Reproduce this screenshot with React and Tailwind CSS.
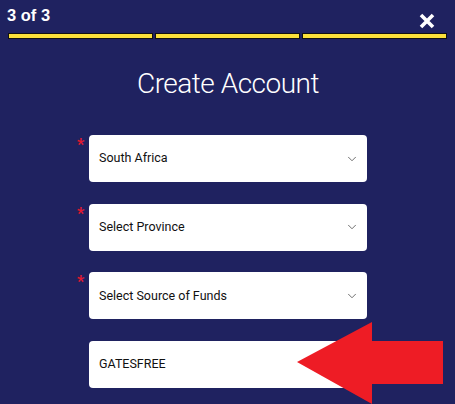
import { ChevronDown } from "lucide-react";

function SelectField({ label, required }) {
  return (
    <div className="relative">
      {required && (
        <span className="absolute -left-[12px] top-[2px] text-[16px] leading-none text-[#e3192f] font-bold">
          *
        </span>
      )}
      <div className="h-[47px] bg-white rounded-[4px] flex items-center justify-between pl-[10px] pr-[8px]">
        <span className="text-[12.5px] text-[#111]">{label}</span>
        <ChevronDown size={14} strokeWidth={1.3} className="text-[#444]" />
      </div>
    </div>
  );
}

export default function App() {
  return (
    <div
      className="relative w-[455px] h-[404px] overflow-hidden bg-[#1f2260]"
      style={{ fontFamily: "Roboto, 'Liberation Sans', sans-serif" }}
    >
      <div className="flex justify-between items-start pl-[7px] pr-[19px] pt-[3px]">
        <span className="text-[16.5px] font-bold text-white" style={{ fontFamily: "'Liberation Sans', Arial, sans-serif" }}>
          3 of 3
        </span>
        <svg width="18" height="16" viewBox="0 0 18 16" className="mt-[10px]">
          <path d="M3 2 L15 14 M15 2 L3 14" stroke="white" strokeWidth="3.6" strokeLinecap="butt" />
        </svg>
      </div>

      <div className="flex gap-[2px] px-[8px] mt-[4px]">
        <div className="flex-1 h-[6px] bg-[#fbe03a] border border-[#111]" />
        <div className="flex-1 h-[6px] bg-[#fbe03a] border border-[#111]" />
        <div className="flex-1 h-[6px] bg-[#fbe03a] border border-[#111]" />
      </div>

      <h1 className="text-center text-white font-light text-[28px] leading-none mt-[31px] tracking-[-0.5px] pl-[1px]">
        Create Account
      </h1>

      <div className="w-[278px] ml-[89px] mt-[37px] flex flex-col gap-[21.7px]">
        <SelectField label="South Africa" required />
        <SelectField label="Select Province" required />
        <SelectField label="Select Source of Funds" required />
        <div className="h-[47px] bg-white rounded-[4px] flex items-center pl-[10px]">
          <span className="text-[12.5px] text-[#111]">GATESFREE</span>
        </div>
      </div>

      <svg className="absolute left-0 top-0" width="455" height="404" viewBox="0 0 455 404">
        <polygon
          points="297,362 372,322 372,341 443,341 443,384 372,384 372,404"
          fill="#ee1c25"
        />
      </svg>
    </div>
  );
}
